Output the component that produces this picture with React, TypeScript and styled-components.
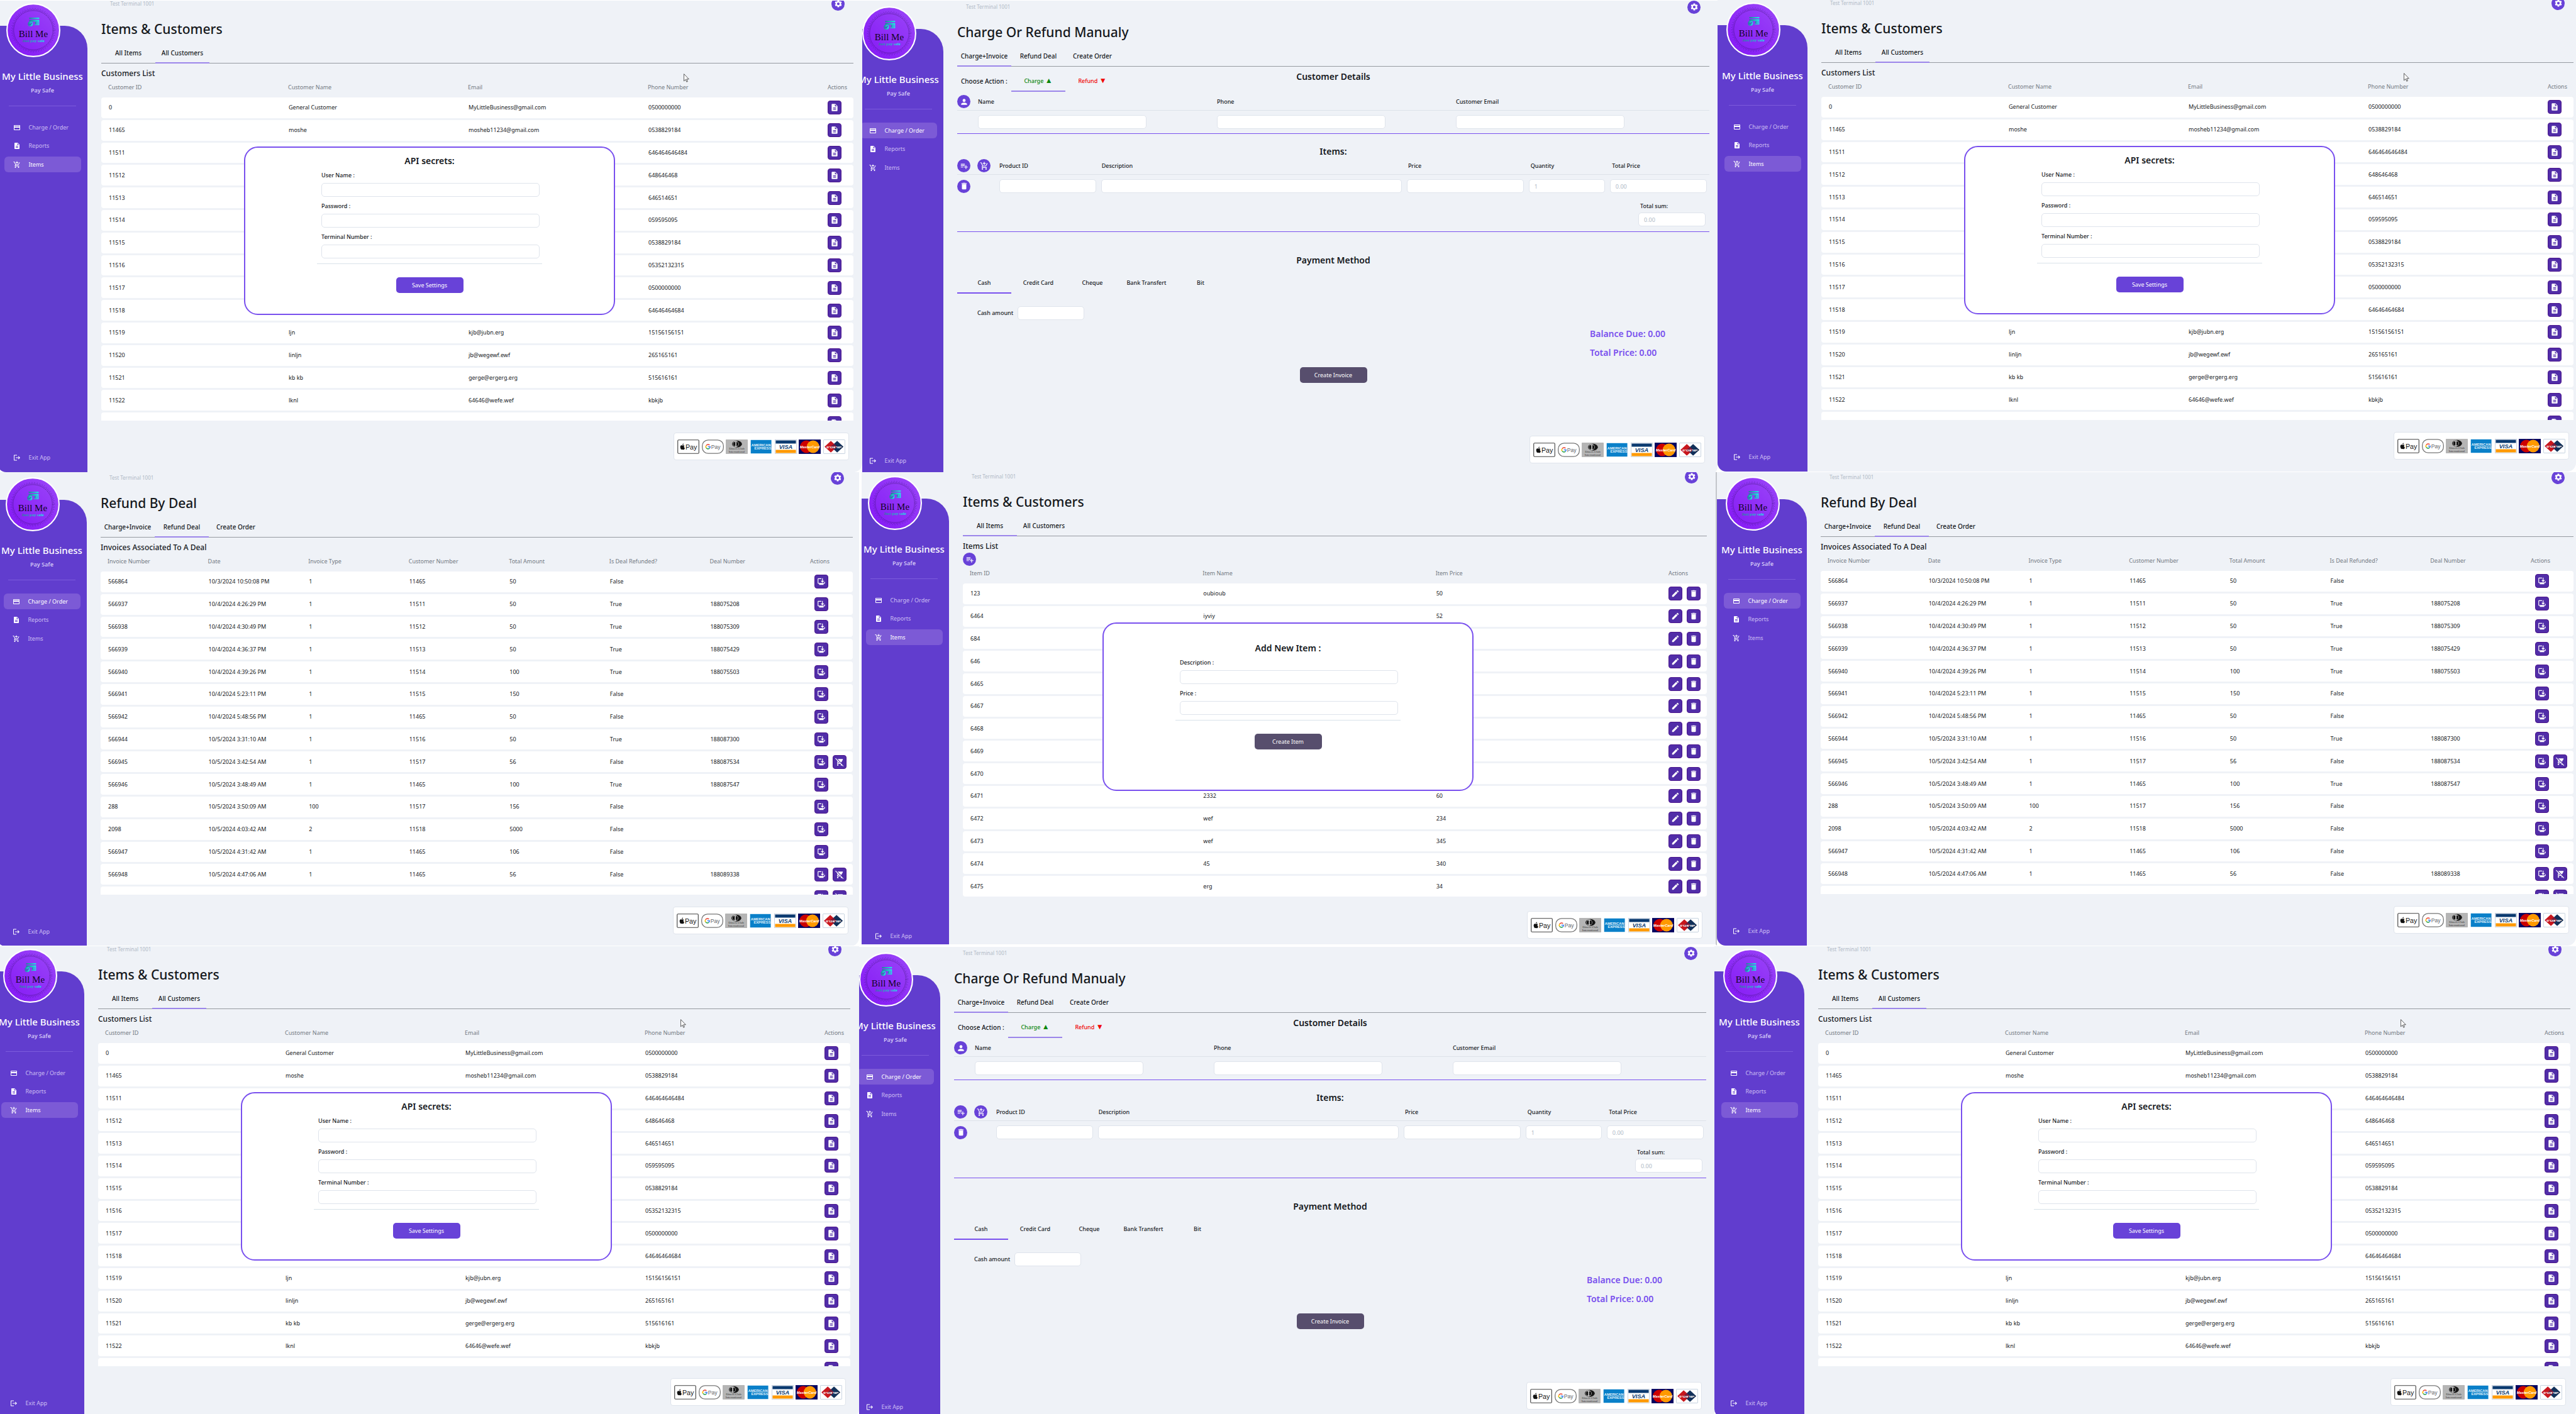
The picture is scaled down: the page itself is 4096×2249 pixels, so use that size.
import React, { useId } from 'react';
import styled, { createGlobalStyle, css } from 'styled-components';
import {
  MdAddShoppingCart,
  MdBrowserUpdated,
  MdCreditCard,
  MdDelete,
  MdDescription,
  MdEdit,
  MdLogout,
  MdPerson,
  MdPlaylistAdd,
  MdRemoveShoppingCart,
  MdSettings,
} from 'react-icons/md';

const color = {
  page: '#eff2f7',
  side: '#613dce',
  primary: '#6842d8',
  accent: '#7950ee',
  action: '#512da8',
  actionEdge: '#4a148c',
  muted: '#574e6d',
  ink: '#15181c',
  head: '#727982',
  faint: '#b1bac6',
  edge: '#dfe4ec',
};

const Global = createGlobalStyle`
  *, *::before, *::after { box-sizing: border-box; }
  html, body, #root { height: 100%; }
  body {
    margin: 0;
    overflow: hidden;
    background: #fff;
    color: ${color.ink};
    font-family: "Noto Sans", "Open Sans", sans-serif;
    font-size: 9px;
    line-height: 12px;
  }
  h1, h2, h3, p { margin: 0; }
  button, input { font: inherit; color: inherit; }
  button { cursor: pointer; padding: 0; border: 0; }
  a { color: inherit; text-decoration: none; }
`;

/* ---------- board of windows ---------- */

const Board = styled.main`
  display: grid;
  grid-template-rows: 751fr 753fr 745fr;
  height: 100vh;
`;

const BoardRow = styled.div<{ $columns: string }>`
  display: grid;
  grid-template-columns: ${(p) => p.$columns};
  min-height: 0;
`;

const Cell = styled.div<{ $top?: number; $left?: number; $right?: number; $bottom?: number }>`
  overflow: hidden;
  min-width: 0;
  min-height: 0;
  border-style: solid;
  border-color: #fff #c3c6cb #fff #fff;
  border-width: ${(p) => `${p.$top ?? 0}px ${p.$right ?? 0}px ${p.$bottom ?? 0}px ${p.$left ?? 0}px`};
`;

const Frame = styled.div<{ $crop: number; $shift: number; $extra: number; $pad: number }>`
  position: relative;
  display: flex;
  gap: 22px;
  height: calc(100% + ${(p) => p.$extra}px);
  margin-left: -${(p) => p.$crop}px;
  padding-top: ${(p) => 1 + p.$shift}px;
  padding-right: ${(p) => p.$pad}px;
  overflow: hidden;
  border-radius: 0 0 14px 14px;
  background: ${color.page};
`;

/* ---------- sidebar ---------- */

const Sidebar = styled.aside`
  display: flex;
  flex: none;
  flex-direction: column;
  align-items: center;
  width: 143px;
  margin-top: 40px;
  padding-bottom: 11px;
  border-radius: 0 36px 0 0;
  background: ${color.side};
  color: #fff;
`;

const LogoSvg = styled.svg`
  flex: none;
  align-self: flex-start;
  width: 86px;
  height: 86px;
  margin: -36px 0 0 14px;
`;

const Business = styled.h2`
  margin-top: 20px;
  font-size: 15px;
  font-weight: 500;
  line-height: 20px;
  white-space: nowrap;
`;

const Tagline = styled.p`
  margin-top: 6px;
  padding-bottom: 17px;
  width: 107px;
  border-bottom: 1px solid #7c5bdc;
  color: #d3c6f6;
  font-weight: 600;
  line-height: 14px;
  text-align: center;
`;

const Nav = styled.nav`
  display: flex;
  flex-direction: column;
  justify-content: space-between;
  height: 84px;
  margin-top: 21px;
`;

const NavLink = styled.a<{ $active?: boolean }>`
  display: flex;
  align-items: center;
  gap: 13px;
  width: 122px;
  height: 25px;
  padding-left: 14px;
  border-radius: 6px;
  background: ${(p) => (p.$active ? '#7c5ad6' : 'transparent')};
  color: ${(p) => (p.$active ? '#fff' : '#cdbff3')};
  svg { width: 12px; height: 12px; color: #fff; }
`;

const ExitLink = styled(NavLink)`
  margin-top: auto;
`;

/* ---------- main column ---------- */

const Main = styled.section`
  display: flex;
  flex: 1;
  flex-direction: column;
  min-width: 0;
`;

const TopBar = styled.header`
  display: flex;
  flex: none;
  align-items: center;
  justify-content: space-between;
  height: 10px;
  padding: 0 14px;
  color: ${color.faint};
  font-size: 8px;
`;

const RoundButton = styled.button`
  display: inline-flex;
  flex: none;
  align-items: center;
  justify-content: center;
  width: 21px;
  height: 21px;
  border-radius: 50%;
  background: ${color.primary};
  color: #fff;
  svg { width: 14px; height: 14px; }
`;

const PageTitle = styled.h1`
  margin-top: 20px;
  font-size: 21px;
  font-weight: 500;
  line-height: 30px;
  white-space: nowrap;
`;

const TabBar = styled.div`
  display: flex;
  flex: none;
  height: 33px;
  margin-top: 7px;
  border-bottom: 1px solid #969ba1;
`;

const Tab = styled.button<{ $active?: boolean; $tone?: string; $line?: string; $small?: boolean }>`
  width: 86px;
  height: 33px;
  border-bottom: 2px solid ${(p) => (p.$active ? p.$line ?? '#9c86ea' : 'transparent')};
  background: transparent;
  color: ${(p) => p.$tone ?? color.ink};
  font-size: ${(p) => (p.$small ? 9 : 10)}px;
  font-weight: 500;
  white-space: nowrap;
`;

const Arrow = styled.span`
  font-size: 12px;
`;

const ListTitle = styled.h2`
  margin-top: 6px;
  font-size: 12px;
  font-weight: 500;
  line-height: 20px;
`;

const ListView = styled.div`
  flex: 1;
  min-height: 0;
  margin-bottom: 19px;
  overflow: hidden;
`;

const Table = styled.table`
  display: block;
`;

const Head = styled.thead`
  display: block;
`;

const rowGrid = css<{ $columns: string }>`
  display: grid;
  grid-template-columns: ${(p) => p.$columns};
  align-items: center;
  padding: 0 11px;
`;

const HeadRow = styled.tr`
  ${rowGrid}
  height: 28px;
  padding-bottom: 4px;
  color: ${color.head};
`;

const HeadCell = styled.th`
  padding: 0;
  font-weight: 400;
  text-align: left;
  white-space: nowrap;
`;

const Body = styled.tbody<{ $height: number }>`
  display: grid;
  grid-auto-rows: 1fr;
  gap: 3px;
  height: ${(p) => p.$height}px;
`;

const Row = styled.tr`
  ${rowGrid}
  border-radius: 4px;
  background: #fff;
`;

const DataCell = styled.td`
  padding: 0 0 0 1px;
  white-space: nowrap;
`;

const ActionCell = styled.td<{ $indent?: number }>`
  display: flex;
  gap: 7px;
  padding: 0 0 0 ${(p) => p.$indent ?? 0}px;
`;

const ActionButton = styled.button`
  display: inline-flex;
  flex: none;
  align-items: center;
  justify-content: center;
  width: 22px;
  height: 22px;
  border: 1px solid ${color.actionEdge};
  border-radius: 4px;
  background: ${color.action};
  color: #fff;
  svg { width: 14px; height: 14px; }
`;

const Payments = styled.ul`
  display: flex;
  flex: none;
  align-items: center;
  align-self: flex-end;
  justify-content: space-between;
  width: 279px;
  height: 44px;
  margin: auto 7px 19px 0;
  padding: 0 5px;
  border: 1px solid ${color.edge};
  border-radius: 4px;
  background: #fff;
  list-style: none;
  svg { display: block; width: 35px; height: 23px; }
`;

/* ---------- forms ---------- */

const Field = styled.input`
  display: block;
  width: 100%;
  height: 22px;
  padding: 0 8px;
  border: 1px solid ${color.edge};
  border-radius: 5px;
  outline: 0;
  background: #fff;
  &::placeholder { color: ${color.faint}; opacity: 1; }
`;

const Label = styled.label`
  font-weight: 500;
  line-height: 12px;
  white-space: nowrap;
`;

const BigButton = styled.button<{ $muted?: boolean }>`
  display: block;
  flex: none;
  width: 107px;
  height: 25px;
  margin: 0 auto;
  border-radius: 5px;
  background: ${(p) => (p.$muted ? color.muted : color.primary)};
  color: #fff;
`;

const SectionTitle = styled.h2`
  font-size: 14px;
  font-weight: 600;
  line-height: 20px;
  text-align: center;
  white-space: nowrap;
`;

const ActionBar = styled.div`
  display: grid;
  grid-template-columns: 1fr auto 1fr;
  height: 40px;
  padding-top: 6px;
`;

const ActionChoice = styled.div`
  display: flex;
  align-items: center;
  height: 34px;
`;

const ChoiceLabel = styled.span`
  width: 86px;
  padding-left: 6px;
  font-size: 10px;
  font-weight: 500;
  white-space: nowrap;
`;

const customerColumns = '33px 380fr 380fr 403fr';
const itemColumns = '59px 154fr 477fr 186fr 121fr 154fr';

const HeaderLine = styled.div<{ $columns: string; $gap?: number }>`
  display: grid;
  grid-template-columns: ${(p) => p.$columns};
  column-gap: ${(p) => p.$gap ?? 0}px;
  align-items: center;
  height: 25px;
  padding-bottom: 3px;
  border-bottom: 1px solid #dde2e9;
`;

const FieldLine = styled.div<{ $columns: string; $gap?: number }>`
  display: grid;
  grid-template-columns: ${(p) => p.$columns};
  column-gap: ${(p) => p.$gap ?? 0}px;
  align-items: center;
  padding-top: 7px;
`;

const CustomerBlock = styled.div`
  margin: 5px 0 18px;
  padding-bottom: 7px;
  border-bottom: 1px solid ${color.accent};
  input { width: 268px; }
`;

const ItemBlock = styled.div`
  margin: 2px 0 35px;
  padding-bottom: 8px;
  border-bottom: 1px solid ${color.accent};
`;

const ItemButtons = styled.div`
  display: flex;
  gap: 11px;
`;

const ItemGrid = styled.div`
  padding-right: 4px;
`;

const TotalSum = styled.div`
  width: 107px;
  margin: 15px 6px 0 auto;
  label { display: block; padding: 0 0 4px 3px; }
`;

const PayTabs = styled.div`
  display: flex;
  margin-top: 10px;
`;

const CashLine = styled.div`
  display: flex;
  align-items: center;
  gap: 7px;
  margin-top: 20px;
  padding-left: 32px;
  input { width: 106px; }
`;

const Totals = styled.div`
  align-self: flex-end;
  width: 190px;
  margin: 12px 0 13px;
  color: ${color.accent};
  font-size: 14px;
  font-weight: 600;
  line-height: 20px;
  p + p { margin-top: 10px; }
`;

/* ---------- dialog and pointer, both lying over the page ---------- */

const Dialog = styled.div<{ $top: number; $left: number; $pad: number }>`
  position: absolute;
  top: ${(p) => p.$top}px;
  left: ${(p) => p.$left}px;
  width: 590px;
  height: 268px;
  padding-top: ${(p) => p.$pad}px;
  border: 2px solid ${color.accent};
  border-radius: 22px;
  background: #fff;
`;

const DialogForm = styled.form`
  width: 358px;
  margin: 7px auto 21px;
  padding: 0 4px 8px 7px;
  border-bottom: 1px solid #d9e2ea;
`;

const DialogField = styled.div`
  & + & { margin-top: 9px; }
  label { display: block; margin-bottom: 6px; }
`;

const Pointer = styled.svg`
  position: absolute;
  top: 116px;
  left: 1091px;
  width: 9px;
  height: 14px;
`;

/* ---------- drawings ---------- */

function Logo() {
  const id = useId();
  return (
    <LogoSvg viewBox="0 0 120 120" role="img" aria-label="Bill Me">
      <defs>
        <linearGradient id={`${id}bg`} x1="0" y1="1" x2="1" y2="0">
          <stop offset="0" stopColor="#8416f5" />
          <stop offset="1" stopColor="#9b48f8" />
        </linearGradient>
        <linearGradient id={`${id}teal`} x1="0" x2="1">
          <stop offset="0" stopColor="#247a9c" />
          <stop offset="1" stopColor="#1cf0e6" />
        </linearGradient>
      </defs>
      <circle cx="60" cy="60" r="58.5" fill={`url(#${id}bg)`} stroke="#fff" strokeWidth="3" />
      <circle cx="60" cy="60" r="43.5" fill="none" stroke="#1b0840" strokeWidth=".8" strokeDasharray="1.6 1.2" />
      <circle cx="60" cy="60" r="46" fill="none" stroke="#2a0d63" strokeWidth="1.2" strokeDasharray="1 2.6" />
      <circle cx="60" cy="60" r="48.5" fill="none" stroke="#3b1484" strokeWidth="1" strokeDasharray="1 4.8" />
      <g fill={`url(#${id}teal)`}>
        <path d="M51 32h22v3H51zM51 37h22v12H62v-2h9v-6H51z" />
        <circle cx="67" cy="44" r="3.2" />
        <circle cx="53.5" cy="46" r="5.6" />
      </g>
      <path d="M51 46l2 2.2 4-4.4" fill="none" stroke="#6420c8" strokeWidth="1.4" />
      <text x="60" y="75" textAnchor="middle" fontFamily="'Liberation Serif', serif" fontSize="21" fill="#12051f">
        Bill Me
      </text>
      <text x="60" y="87" textAnchor="middle" fontFamily="'Liberation Serif', serif" fontSize="9" fontWeight="700" fill={`url(#${id}teal)`}>
        Just pay safe
      </text>
    </LogoSvg>
  );
}

const brandFont = "'Liberation Sans', sans-serif";

function ApplePay() {
  return (
    <svg viewBox="0 0 49 32" role="img" aria-label="Apple Pay">
      <rect x="1" y="1" width="47" height="30" rx="2" fill="#fff" stroke="#444" strokeWidth="1.6" />
      <path d="M13.2 11.6c.9-1 .8-2.1.7-2.6-1 .1-2.6 1.2-2.4 3 .6.1 1.2-.1 1.7-.4zM15.6 13.7c-1.3-1.4-2.9-.5-3.7-.5s-2-.9-3.5-.2C6 14.3 6 17.8 7.4 20.6c1.5 2.9 2.7 1.8 4.2 1.7 1.4 0 2.4 1.2 4-.8.7-.9 1-1.7 1.2-2.2-2.4-1.2-2.4-4.3-1.2-5.6z" fill="#111" />
      <text x="31" y="22" textAnchor="middle" fontFamily={brandFont} fontSize="15" fill="#111">Pay</text>
    </svg>
  );
}

function GooglePay() {
  return (
    <svg viewBox="0 0 49 32" role="img" aria-label="Google Pay">
      <rect x="1" y="1" width="47" height="30" rx="13" fill="#fff" stroke="#777" strokeWidth="1.8" />
      <g fill="none" strokeWidth="2.2">
        <path d="M17.2 12.3a5 5 0 0 0-7.6 1" stroke="#ea4335" />
        <path d="M9.6 13.3a5 5 0 0 0 0 5.3" stroke="#fbbc04" />
        <path d="M9.6 18.6a5 5 0 0 0 7.2 1.1" stroke="#34a853" />
        <path d="M16.8 19.7a5 5 0 0 0 1.7-3.7h-5" stroke="#4285f4" />
      </g>
      <text x="31" y="21" textAnchor="middle" fontFamily={brandFont} fontSize="12" fill="#5f6368">Pay</text>
    </svg>
  );
}

function Diners() {
  return (
    <svg viewBox="0 0 49 32" role="img" aria-label="Diners Club International">
      <rect width="49" height="32" rx="1" fill="#b5b5b5" />
      <ellipse cx="25" cy="10" rx="11" ry="7.6" fill="#151515" />
      <circle cx="22.5" cy="10" r="6.6" fill="#e4e4e4" />
      <path d="M21.5 5a5 5 0 0 0 0 10zM23.5 5a5 5 0 0 1 0 10z" fill="#151515" />
      <text x="24.5" y="23" textAnchor="middle" fontFamily="'Liberation Serif', serif" fontSize="7" fill="#333">Diners Club</text>
      <text x="24.5" y="29" textAnchor="middle" fontFamily="'Liberation Serif', serif" fontSize="7" fill="#333">International</text>
    </svg>
  );
}

function Amex() {
  return (
    <svg viewBox="0 0 49 32" role="img" aria-label="American Express">
      <rect x="1" y="1" width="46" height="30" fill="#0a80c9" />
      <g fontFamily={brandFont} fontWeight="700" fontSize="8" fill="#e6f4fc">
        <text x="24" y="15" textAnchor="middle">AMERICAN</text>
        <text x="28" y="23" textAnchor="middle">EXPRESS</text>
      </g>
    </svg>
  );
}

function Visa() {
  return (
    <svg viewBox="0 0 49 32" role="img" aria-label="Visa">
      <rect x=".5" y=".5" width="48" height="31" fill="#fff" stroke="#b9c3d6" />
      <rect x="2" y="2" width="45" height="7" fill="#0b3a70" />
      <rect x="2" y="23" width="45" height="7" fill="#f90" />
      <text x="24.5" y="21" textAnchor="middle" fontFamily={brandFont} fontWeight="700" fontStyle="italic" fontSize="13" fill="#0b3a70">VISA</text>
    </svg>
  );
}

function MasterCard() {
  return (
    <svg viewBox="0 0 49 32" role="img" aria-label="MasterCard">
      <rect width="49" height="32" fill="#050560" />
      <circle cx="17" cy="16" r="14" fill="#c00" />
      <circle cx="32" cy="16" r="14" fill="#f90" />
      <text x="24.5" y="19" textAnchor="middle" fontFamily={brandFont} fontWeight="700" fontStyle="italic" fontSize="8" fill="#fff">MasterCard</text>
    </svg>
  );
}

function Isracard() {
  return (
    <svg viewBox="0 0 49 32" role="img" aria-label="Isracard">
      <rect x=".5" y=".5" width="48" height="31" rx="2" fill="#fff" stroke="#a9bccf" />
      <path d="M17 3l14 13-14 13L3 16z" fill="#c8171d" />
      <path d="M31 3l14 13-14 13-14-13z" fill="#12315a" />
      <path d="M24 9.5l7 6.5-7 6.5-7-6.5z" fill="#7c1b38" />
      <text x="24" y="19" textAnchor="middle" fontFamily="'DejaVu Sans', sans-serif" fontWeight="700" fontSize="8" fill="#fff">ישראכרט</text>
    </svg>
  );
}

function PaymentStrip() {
  return (
    <Payments>
      <li><ApplePay /></li>
      <li><GooglePay /></li>
      <li><Diners /></li>
      <li><Amex /></li>
      <li><Visa /></li>
      <li><MasterCard /></li>
      <li><Isracard /></li>
    </Payments>
  );
}

/* ---------- shared shell ---------- */

interface Placement {
  crop?: number;
  shift?: number;
  extra?: number;
  pad?: number;
}

interface ShellProps extends Placement {
  section: 'charge' | 'items';
  title: string;
  tabs: string[];
  tab: number;
  overlay?: React.ReactNode;
  children: React.ReactNode;
}

function Shell({ section, title, tabs, tab, overlay, children, crop = 0, shift = 0, extra = 0, pad = 4 }: ShellProps) {
  return (
    <Frame $crop={crop} $shift={shift} $extra={extra} $pad={pad}>
      <Sidebar>
        <Logo />
        <Business>My Little Business</Business>
        <Tagline>Pay Safe</Tagline>
        <Nav>
          <NavLink href="#charge" $active={section === 'charge'}><MdCreditCard />Charge / Order</NavLink>
          <NavLink href="#reports"><MdDescription />Reports</NavLink>
          <NavLink href="#items" $active={section === 'items'}><MdAddShoppingCart />Items</NavLink>
        </Nav>
        <ExitLink href="#exit"><MdLogout />Exit App</ExitLink>
      </Sidebar>
      <Main>
        <TopBar>
          <span>Test Terminal 1001</span>
          <RoundButton aria-label="Settings"><MdSettings /></RoundButton>
        </TopBar>
        <PageTitle>{title}</PageTitle>
        <TabBar>
          {tabs.map((name, i) => (
            <Tab key={name} $active={i === tab}>{name}</Tab>
          ))}
        </TabBar>
        {children}
        <PaymentStrip />
      </Main>
      {overlay}
    </Frame>
  );
}

interface DataTableProps {
  columns: string;
  heads: string[];
  rows: string[][];
  height: number;
  indent?: number;
  actions: (row: string[]) => React.ReactNode;
}

function DataTable({ columns, heads, rows, height, indent, actions }: DataTableProps) {
  return (
    <Table>
      <Head>
        <HeadRow $columns={columns}>
          {heads.map((h) => <HeadCell key={h}>{h}</HeadCell>)}
        </HeadRow>
      </Head>
      <Body $height={height}>
        {rows.map((row) => (
          <Row key={row[0]} $columns={columns}>
            {row.map((value, i) => <DataCell key={i}>{value}</DataCell>)}
            <ActionCell $indent={indent}>{actions(row)}</ActionCell>
          </Row>
        ))}
      </Body>
    </Table>
  );
}

interface FormDialogProps {
  title: string;
  fields: string[];
  submit: string;
  muted?: boolean;
  top: number;
  left: number;
  pad: number;
}

function FormDialog({ title, fields, submit, muted, top, left, pad }: FormDialogProps) {
  const id = useId();
  return (
    <Dialog role="dialog" aria-label={title} $top={top} $left={left} $pad={pad}>
      <SectionTitle>{title}</SectionTitle>
      <DialogForm>
        {fields.map((f) => (
          <DialogField key={f}>
            <Label htmlFor={id + f}>{f} :</Label>
            <Field id={id + f} />
          </DialogField>
        ))}
      </DialogForm>
      <BigButton $muted={muted}>{submit}</BigButton>
    </Dialog>
  );
}

/* ---------- screens ---------- */

const customers = [
  ['0', 'General Customer', 'MyLittleBusiness@gmail.com', '0500000000'],
  ['11465', 'moshe', 'mosheb11234@gmail.com', '0538829184'],
  ['11511', '', '', '646464646484'],
  ['11512', '', '', '648646468'],
  ['11513', '', '', '646514651'],
  ['11514', '', '', '059595095'],
  ['11515', '', '', '0538829184'],
  ['11516', '', '', '05352132315'],
  ['11517', '', '', '0500000000'],
  ['11518', '', '', '64646464684'],
  ['11519', 'ljn', 'kjb@jubn.erg', '15156156151'],
  ['11520', 'linljn', 'jb@wegewf.ewf', '265165161'],
  ['11521', 'kb kb', 'gerge@ergerg.erg', '515616161'],
  ['11522', 'lknl', '64646@wefe.wef', 'kbkjb'],
  ['', '', '', ''],
];

function CustomersScreen(place: Placement) {
  return (
    <Shell
      {...place}
      section="items"
      title="Items & Customers"
      tabs={['All Items', 'All Customers']}
      tab={1}
      overlay={
        <>
          <FormDialog title="API secrets:" fields={['User Name', 'Password', 'Terminal Number']} submit="Save Settings" top={233 + (place.shift ?? 0)} left={392} pad={11} />
          <Pointer viewBox="0 0 12 19" aria-hidden="true">
            <path d="M.5.8v15.4l3.6-3.4 2.3 5.2 2.2-1-2.3-5h4.9z" fill="#fff" stroke="#222" />
          </Pointer>
        </>
      }
    >
      <ListTitle>Customers List</ListTitle>
      <ListView>
        <DataTable
          columns="repeat(4, 1fr) 30px"
          heads={['Customer ID', 'Customer Name', 'Email', 'Phone Number', 'Actions']}
          rows={customers}
          height={534}
          actions={() => <ActionButton aria-label="Customer report"><MdDescription /></ActionButton>}
        />
      </ListView>
    </Shell>
  );
}

const deals = [
  ['566864', '10/3/2024 10:50:08 PM', '1', '11465', '50', 'False', ''],
  ['566937', '10/4/2024 4:26:29 PM', '1', '11511', '50', 'True', '188075208'],
  ['566938', '10/4/2024 4:30:49 PM', '1', '11512', '50', 'True', '188075309'],
  ['566939', '10/4/2024 4:36:37 PM', '1', '11513', '50', 'True', '188075429'],
  ['566940', '10/4/2024 4:39:26 PM', '1', '11514', '100', 'True', '188075503'],
  ['566941', '10/4/2024 5:23:11 PM', '1', '11515', '150', 'False', ''],
  ['566942', '10/4/2024 5:48:56 PM', '1', '11465', '50', 'False', ''],
  ['566944', '10/5/2024 3:31:10 AM', '1', '11516', '50', 'True', '188087300'],
  ['566945', '10/5/2024 3:42:54 AM', '1', '11517', '56', 'False', '188087534'],
  ['566946', '10/5/2024 3:48:49 AM', '1', '11465', '100', 'True', '188087547'],
  ['288', '10/5/2024 3:50:09 AM', '100', '11517', '156', 'False', ''],
  ['2098', '10/5/2024 4:03:42 AM', '2', '11518', '5000', 'False', ''],
  ['566947', '10/5/2024 4:31:42 AM', '1', '11465', '106', 'False', ''],
  ['566948', '10/5/2024 4:47:06 AM', '1', '11465', '56', 'False', '188089338'],
  ['', '', '', '', '', '', ''],
];

const refundable = new Set(['566945', '566948', '']);

function RefundScreen(place: Placement) {
  return (
    <Shell {...place} section="charge" title="Refund By Deal" tabs={['Charge+Invoice', 'Refund Deal', 'Create Order']} tab={1}>
      <ListTitle>Invoices Associated To A Deal</ListTitle>
      <ListView>
        <DataTable
          columns="repeat(7, 1fr) 57px"
          indent={7}
          heads={['Invoice Number', 'Date', 'Invoice Type', 'Customer Number', 'Total Amount', 'Is Deal Refunded?', 'Deal Number', 'Actions']}
          rows={deals}
          height={534}
          actions={(row) => (
            <>
              <ActionButton aria-label="Download invoice"><MdBrowserUpdated /></ActionButton>
              {refundable.has(row[0]) && <ActionButton aria-label="Refund deal"><MdRemoveShoppingCart /></ActionButton>}
            </>
          )}
        />
      </ListView>
    </Shell>
  );
}

const items = [
  ['123', 'oubioub', '50'],
  ['6464', 'iyviy', '52'],
  ['684', '', ''],
  ['646', '', ''],
  ['6465', '', ''],
  ['6467', '', ''],
  ['6468', '', ''],
  ['6469', '', ''],
  ['6470', '', ''],
  ['6471', '2332', '60'],
  ['6472', 'wef', '234'],
  ['6473', 'wef', '345'],
  ['6474', '45', '340'],
  ['6475', 'erg', '34'],
];

function ItemsScreen(place: Placement) {
  return (
    <Shell
      {...place}
      section="items"
      title="Items & Customers"
      tabs={['All Items', 'All Customers']}
      tab={0}
      overlay={<FormDialog title="Add New Item :" fields={['Description', 'Price']} submit="Create Item" muted top={239} left={387} pad={29} />}
    >
      <ListTitle>Items List</ListTitle>
      <RoundButton aria-label="Add item"><MdPlaylistAdd /></RoundButton>
      <ListView>
        <DataTable
          columns="repeat(3, 1fr) 50px"
          heads={['Item ID', 'Item Name', 'Item Price', 'Actions']}
          rows={items}
          height={498}
          actions={() => (
            <>
              <ActionButton aria-label="Edit item"><MdEdit /></ActionButton>
              <ActionButton aria-label="Delete item"><MdDelete /></ActionButton>
            </>
          )}
        />
      </ListView>
    </Shell>
  );
}

function ChargeScreen(place: Placement) {
  const id = useId();
  const customerFields = ['Name', 'Phone', 'Customer Email'];
  const itemFields: [string, string?][] = [['Product ID'], ['Description'], ['Price'], ['Quantity', '1'], ['Total Price', '0.00']];
  return (
    <Shell {...place} section="charge" title="Charge Or Refund Manualy" tabs={['Charge+Invoice', 'Refund Deal', 'Create Order']} tab={0}>
      <ActionBar>
        <ActionChoice>
          <ChoiceLabel>Choose Action :</ChoiceLabel>
          <Tab $active $small $tone="#0b860b">Charge <Arrow>▲</Arrow></Tab>
          <Tab $small $tone="#f00000">Refund <Arrow>▼</Arrow></Tab>
        </ActionChoice>
        <SectionTitle>Customer Details</SectionTitle>
      </ActionBar>
      <CustomerBlock>
        <HeaderLine $columns={customerColumns}>
          <RoundButton aria-label="Choose customer"><MdPerson /></RoundButton>
          {customerFields.map((f) => <Label key={f} htmlFor={id + f}>{f}</Label>)}
        </HeaderLine>
        <FieldLine $columns={customerColumns}>
          <span />
          {customerFields.map((f) => <Field key={f} id={id + f} />)}
        </FieldLine>
      </CustomerBlock>
      <SectionTitle>Items:</SectionTitle>
      <ItemBlock>
        <HeaderLine $columns={itemColumns} $gap={8}>
          <ItemButtons>
            <RoundButton aria-label="Add line"><MdPlaylistAdd /></RoundButton>
            <RoundButton aria-label="Add item"><MdAddShoppingCart /></RoundButton>
          </ItemButtons>
          {itemFields.map(([f]) => <Label key={f} htmlFor={`${id}item ${f}`}>{f}</Label>)}
        </HeaderLine>
        <ItemGrid>
          <FieldLine $columns={itemColumns} $gap={8}>
            <RoundButton aria-label="Remove line"><MdDelete /></RoundButton>
            {itemFields.map(([f, hint]) => <Field key={f} id={`${id}item ${f}`} placeholder={hint} />)}
          </FieldLine>
        </ItemGrid>
        <TotalSum>
          <Label htmlFor={`${id}sum`}>Total sum:</Label>
          <Field id={`${id}sum`} placeholder="0.00" />
        </TotalSum>
      </ItemBlock>
      <SectionTitle>Payment Method</SectionTitle>
      <PayTabs>
        {['Cash', 'Credit Card', 'Cheque', 'Bank Transfert', 'Bit'].map((name, i) => (
          <Tab key={name} $small $active={i === 0} $line={color.accent}>{name}</Tab>
        ))}
      </PayTabs>
      <CashLine>
        <Label htmlFor={`${id}cash`}>Cash amount</Label>
        <Field id={`${id}cash`} />
      </CashLine>
      <Totals>
        <p>Balance Due: 0.00</p>
        <p>Total Price: 0.00</p>
      </Totals>
      <BigButton $muted>Create Invoice</BigButton>
    </Shell>
  );
}

export default function App() {
  return (
    <>
      <Global />
      <Board>
        <BoardRow $columns="1371fr 1360fr 1365fr">
          <Cell $top={1}><CustomersScreen crop={4} shift={-1} pad={14} /></Cell>
          <Cell $top={1}><ChargeScreen crop={14} shift={4} extra={5} pad={13} /></Cell>
          <Cell><CustomersScreen shift={-1} extra={-1} pad={4} /></Cell>
        </BoardRow>
        <BoardRow $columns="1366fr 1364fr 1366fr">
          <Cell><RefundScreen crop={5} shift={3} extra={1} pad={10} /></Cell>
          <Cell $left={4} $right={2} $bottom={2}><ItemsScreen crop={4} shift={1} extra={10} pad={14} /></Cell>
          <Cell><RefundScreen shift={2} pad={4} /></Cell>
        </BoardRow>
        <BoardRow $columns="1366fr 1360fr 1370fr">
          <Cell $top={1}><CustomersScreen crop={9} shift={-1} extra={6} pad={14} /></Cell>
          <Cell $top={2}><ChargeScreen crop={14} shift={4} extra={12} pad={13} /></Cell>
          <Cell $top={1}><CustomersScreen shift={-1} extra={6} pad={9} /></Cell>
        </BoardRow>
      </Board>
    </>
  );
}
